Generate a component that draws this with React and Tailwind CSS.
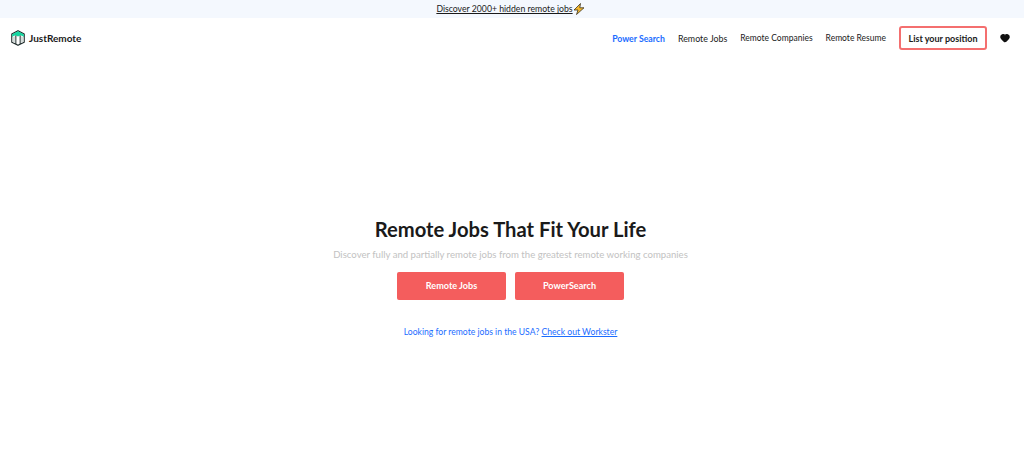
import { Heart } from "lucide-react";

const NAV_LINKS = [
  { label: "Remote Jobs", size: "text-[8.85px]" },
  { label: "Remote Companies", size: "text-[8.5px]" },
  { label: "Remote Resume", size: "text-[8.5px]" },
];

function Logo() {
  return (
    <svg width="14" height="16" viewBox="0 0 14 16" fill="none">
      <path d="M7 .7 13.200 4v8.200L7 15.300.8 12.200V4z" fill="#fff" stroke="#1d2a2a" strokeWidth="1.200" strokeLinejoin="round" />
      <path d="M7 1.200 12.800 4.300V6.800L9.500 5.300 7 6.400 4.500 5.300 1.200 6.800V4.300z" fill="#12d6a0" />
      <path d="M4.800 5.500V14M9.200 5.500V14" stroke="#1d2a2a" strokeWidth="1.100" />
      <path d="M1.500 7.300 4.200 6.300V13L1.500 11.700zM9.800 6.300 12.500 7.300V11.700L9.800 13z" fill="#d5dcda" />
    </svg>
  );
}

function Bolt() {
  return (
    <svg width="12" height="12" viewBox="0 0 12 12">
      <path d="M7.500.5 1 7h4l-1.500 4.500L11 4.800H6.800z" fill="#f5b82e" stroke="#3a3320" strokeWidth=".8" strokeLinejoin="round" />
    </svg>
  );
}

export default function App() {
  return (
    <div className="min-h-[456px] bg-white font-['Lato',sans-serif] text-[#1a1a1a]">
      {/* Banner */}
      <div className="h-[18px] pr-[3px] bg-[#f4f8fe] flex items-center justify-center text-[8.7px]">
        <span className="underline">Discover 2000+ hidden remote jobs</span>
        <Bolt />
      </div>

      {/* Nav */}
      <header className="h-10 flex items-center justify-between pl-[11px] pr-[14px]">
        <div className="flex items-center gap-1">
          <Logo />
          <span className="text-[10px] font-bold">JustRemote</span>
        </div>
        <nav className="flex items-center">
          <a className="text-[8.7px] font-bold text-[#1a6cff] mr-[13px] pt-px">Power Search</a>
          {NAV_LINKS.map((l) => (
            <a key={l.label} className={`${l.size} mr-[13px] pt-px`}>
              {l.label}
            </a>
          ))}
          <a className="w-[88px] h-6 flex items-center justify-center border-2 border-[#f46f6f] rounded-[3px] text-[9px] font-bold pt-px">
            List your position
          </a>
          <Heart className="ml-[13px] w-[10px] h-[10px]" fill="#111" stroke="#111" strokeWidth={3} />
        </nav>
      </header>

      {/* Hero */}
      <main className="flex flex-col items-center pt-[158px] pr-[3px]">
        <h1 className="text-[20.2px] leading-[26px] font-bold">Remote Jobs That Fit Your Life</h1>
        <p className="mt-[6px] text-[9.6px] leading-[14px] text-[#c2c2c2]">
          Discover fully and partially remote jobs from the greatest remote working companies
        </p>
        <div className="flex gap-[9px] mt-[10px]">
          <a className="w-[109px] h-7 flex items-center justify-center bg-[#f45d5d] rounded-[2px] text-white text-[9.1px] font-bold">
            Remote Jobs
          </a>
          <a className="w-[109px] h-7 flex items-center justify-center bg-[#f45d5d] rounded-[2px] text-white text-[9.1px] font-bold">
            PowerSearch
          </a>
        </div>
        <p className="mt-[26px] text-[8.6px] text-[#1a6cff]">
          Looking for remote jobs in the USA? <a className="underline">Check out Workster</a>
        </p>
      </main>
    </div>
  );
}
